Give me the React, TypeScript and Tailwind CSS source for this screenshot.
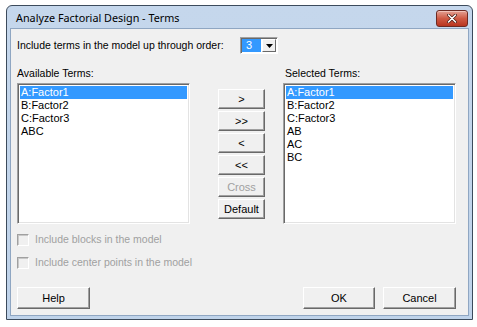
import React from 'react';

const leftTerms = ['A:Factor1', 'B:Factor2', 'C:Factor3', 'ABC'];
const rightTerms = ['A:Factor1', 'B:Factor2', 'C:Factor3', 'AB', 'AC', 'BC'];
const moveButtons = ['>', '>>', '<', '<<', 'Cross', 'Default'];

const ui = { fontFamily: '"Liberation Sans", Arial, sans-serif' };

function ClassicButton({ label, disabled, className }: { label: string; disabled?: boolean; className?: string }) {
  return (
    <button
      className={
        'flex items-center justify-center border border-t-white border-l-white border-b-[#696969] border-r-[#696969] bg-[#f0f0f0] text-[11px] leading-none shadow-[inset_-1px_-1px_0_#a0a0a0] ' +
        (disabled ? 'text-[#a0a0a0] ' : 'text-black ') +
        (className ?? '')
      }
      style={ui}
    >
      {label}
    </button>
  );
}

function ListBox({ items }: { items: string[] }) {
  return (
    <div className="h-[141px] w-[173px] border border-t-[#a0a0a0] border-l-[#a0a0a0] border-b-white border-r-white bg-white shadow-[inset_1px_1px_0_#696969,inset_-1px_-1px_0_#e3e3e3] p-[2px]">
      {items.map((t, i) => (
        <div
          key={t}
          className={'h-[13px] pl-[1px] text-[11px] leading-[13px] ' + (i === 0 ? 'bg-[#3399ff] text-white' : 'text-black')}
          style={ui}
        >
          {t}
        </div>
      ))}
    </div>
  );
}

function Check({ label }: { label: string }) {
  return (
    <div className="flex h-[13px] items-center gap-[6px]">
      <div className="h-[12px] w-[12px] border border-t-[#a0a0a0] border-l-[#a0a0a0] border-b-white border-r-white bg-[#f0f0f0] shadow-[inset_1px_1px_0_#c8c8c8]" />
      <span className="text-[10.5px] leading-[13px] text-[#a0a0a0]" style={ui}>
        {label}
      </span>
    </div>
  );
}

export default function App() {
  return (
    <div className="h-[327px] w-[477px] bg-white pl-[6px] pt-[5px]">
      <div className="flex h-[315px] w-[467px] flex-col rounded-t-[6px] border border-[#3c4b5c] bg-gradient-to-b from-[#c5d7ec] to-[#bfd3ea] px-[3px] pb-[3px]">
        {/* title bar */}
        <div className="flex h-[22px] items-center justify-between pl-[6px] pr-[1px]">
          <span className="mt-[2px] text-[10.8px] text-black" style={{ fontFamily: '"Noto Sans", "Liberation Sans", sans-serif' }}>
            Analyze Factorial Design - Terms
          </span>
          <div className="mt-[3px] flex h-[17px] w-[32px] items-center justify-center rounded-[3px] border border-[#6d2a22] bg-gradient-to-b from-[#e3a093] via-[#cf5a44] to-[#b8341e] shadow-[inset_0_1px_0_#f2c2b8]">
            <svg width="10" height="9" viewBox="0 0 10 9">
              <path d="M1.5 1 L8.5 8 M8.5 1 L1.5 8" stroke="#4a1a12" strokeWidth="3" strokeLinecap="round" />
              <path d="M1.5 1 L8.5 8 M8.5 1 L1.5 8" stroke="white" strokeWidth="1.6" strokeLinecap="round" />
            </svg>
          </div>
        </div>

        {/* body */}
        <div className="flex flex-1 flex-col border border-[#8fa6c2] bg-[#f0f0f0] pl-[6px]">
          <div className="mt-[8px] flex h-[17px] items-center">
            <span className="w-[223px] text-[10.5px] text-black" style={ui}>
              Include terms in the model up through order:
            </span>
            <div className="flex h-[17px] w-[38px] items-center border border-t-[#a0a0a0] border-l-[#a0a0a0] border-b-white border-r-white bg-white p-[1px] shadow-[inset_1px_1px_0_#696969]">
              <div className="flex h-[13px] w-[19px] items-center bg-[#3399ff] pl-[4px] text-[11px] text-white" style={ui}>
                3
              </div>
              <div className="ml-[1px] flex h-[13px] w-[14px] items-center justify-center border border-t-white border-l-white border-b-[#696969] border-r-[#696969] bg-[#f0f0f0]">
                <svg width="7" height="4" viewBox="0 0 7 4">
                  <path d="M0 0 H7 L3.5 4 Z" fill="black" />
                </svg>
              </div>
            </div>
          </div>

          <div className="mt-[13px] flex h-[13px] items-center">
            <span className="w-[268px] text-[10.5px] text-black" style={ui}>
              Available Terms:
            </span>
            <span className="text-[10.5px] text-black" style={ui}>
              Selected Terms:
            </span>
          </div>

          <div className="mt-[3px] flex">
            <ListBox items={leftTerms} />
            <div className="ml-[28px] mt-[6px] flex w-[47px] flex-col gap-[2px]">
              {moveButtons.map((b) => (
                <ClassicButton key={b} label={b} disabled={b === 'Cross'} className="h-[20px] w-[47px]" />
              ))}
            </div>
            <div className="ml-[18px]">
              <ListBox items={rightTerms} />
            </div>
          </div>

          <div className="mt-[9px]">
            <Check label="Include blocks in the model" />
          </div>
          <div className="mt-[10px]">
            <Check label="Include center points in the model" />
          </div>

          <div className="mt-[18px] flex">
            <ClassicButton label="Help" className="h-[22px] w-[73px]" />
            <ClassicButton label="OK" className="ml-[213px] h-[22px] w-[72px]" />
            <ClassicButton label="Cancel" className="ml-[8px] h-[22px] w-[73px]" />
          </div>
        </div>
      </div>
    </div>
  );
}
